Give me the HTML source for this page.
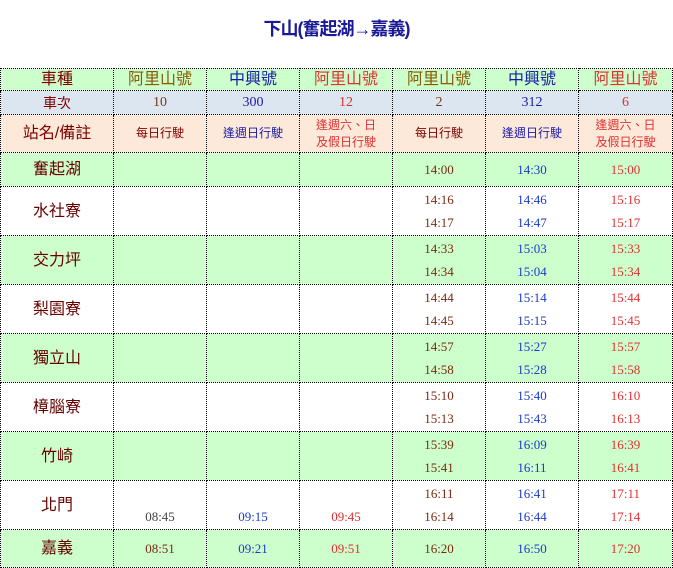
<!DOCTYPE html>
<html><head><meta charset="utf-8"><style>
body{margin:0;background:#fff;width:673px;height:565px;overflow:hidden;position:relative;font-family:"Liberation Serif","Noto Serif CJK SC",serif;}
.title{position:absolute;top:15px;left:0;width:673px;text-align:center;color:#1a1a99;font-family:"Liberation Sans","Noto Sans CJK TC",sans-serif;font-size:18px;font-weight:bold;letter-spacing:-1px}
table{position:absolute;left:0;top:68px;border-collapse:collapse;table-layout:fixed;width:672px}
td{border:1px dotted #000;text-align:center;padding:0;font-size:13px;line-height:23px;overflow:hidden}
.h td{font-family:"Liberation Sans","Noto Sans CJK TC",sans-serif;font-size:16px;line-height:20px}
.g td,.g{background:#ccffcc}
.b td{background:#dce6f1;font-size:14px;line-height:20px}
.p td{background:#fde9d9;font-family:"Liberation Sans","Noto Sans CJK TC",sans-serif;font-size:12px;line-height:17px}
.st{font-family:"Liberation Sans","Noto Sans CJK TC",sans-serif;font-size:16px;color:#660000}
.c1{color:#8a5a00}.c2{color:#1a1aaa}.c3{color:#e03030}
.t1{color:#7a2a10}.t2{color:#1a3acc}.t3{color:#e03030}
</style></head><body>
<div class="title">下山(奮起湖→嘉義)</div>
<table>
<colgroup><col style="width:113px"><col style="width:93px"><col style="width:93px"><col style="width:93px"><col style="width:93px"><col style="width:93px"><col style="width:94px"></colgroup>
<tr class="h g" style="height:22px"><td style="color:#800000">車種</td><td class="c1">阿里山號</td><td class="c2">中興號</td><td class="c3">阿里山號</td><td class="c1">阿里山號</td><td class="c2">中興號</td><td class="c3">阿里山號</td></tr>
<tr class="b" style="height:24px"><td class="st" style="color:#800000">車次</td><td class="c1" style="color:#7a3a10">10</td><td class="c2">300</td><td class="c3">12</td><td style="color:#7a3a10">2</td><td class="c2">312</td><td class="c3">6</td></tr>
<tr class="p" style="height:38px"><td class="st" style="color:#800000;font-size:16px">站名/備註</td><td style="color:#800000">每日行駛</td><td class="c2">逢週日行駛</td><td class="c3">逢週六、日<br>及假日行駛</td><td style="color:#800000">每日行駛</td><td class="c2">逢週日行駛</td><td class="c3">逢週六、日<br>及假日行駛</td></tr>
<tr class="g" style="height:34px"><td class="st">奮起湖</td><td></td><td></td><td></td><td class="t1">14:00</td><td class="t2">14:30</td><td class="t3">15:00</td></tr>
<tr style="height:49px"><td class="st">水社寮</td><td></td><td></td><td></td><td class="t1">14:16<br>14:17</td><td class="t2">14:46<br>14:47</td><td class="t3">15:16<br>15:17</td></tr>
<tr class="g" style="height:49px"><td class="st">交力坪</td><td></td><td></td><td></td><td class="t1">14:33<br>14:34</td><td class="t2">15:03<br>15:04</td><td class="t3">15:33<br>15:34</td></tr>
<tr style="height:49px"><td class="st">梨園寮</td><td></td><td></td><td></td><td class="t1">14:44<br>14:45</td><td class="t2">15:14<br>15:15</td><td class="t3">15:44<br>15:45</td></tr>
<tr class="g" style="height:49px"><td class="st">獨立山</td><td></td><td></td><td></td><td class="t1">14:57<br>14:58</td><td class="t2">15:27<br>15:28</td><td class="t3">15:57<br>15:58</td></tr>
<tr style="height:49px"><td class="st">樟腦寮</td><td></td><td></td><td></td><td class="t1">15:10<br>15:13</td><td class="t2">15:40<br>15:43</td><td class="t3">16:10<br>16:13</td></tr>
<tr class="g" style="height:49px"><td class="st">竹崎</td><td></td><td></td><td></td><td class="t1">15:39<br>15:41</td><td class="t2">16:09<br>16:11</td><td class="t3">16:39<br>16:41</td></tr>
<tr style="height:49px"><td class="st">北門</td><td style="color:#444">&nbsp;<br>08:45</td><td class="t2">&nbsp;<br>09:15</td><td class="t3">&nbsp;<br>09:45</td><td class="t1">16:11<br>16:14</td><td class="t2">16:41<br>16:44</td><td class="t3">17:11<br>17:14</td></tr>
<tr class="g" style="height:38px"><td class="st">嘉義</td><td class="t1">08:51</td><td class="t2">09:21</td><td class="t3">09:51</td><td class="t1">16:20</td><td class="t2">16:50</td><td class="t3">17:20</td></tr>
</table>
</body></html>
